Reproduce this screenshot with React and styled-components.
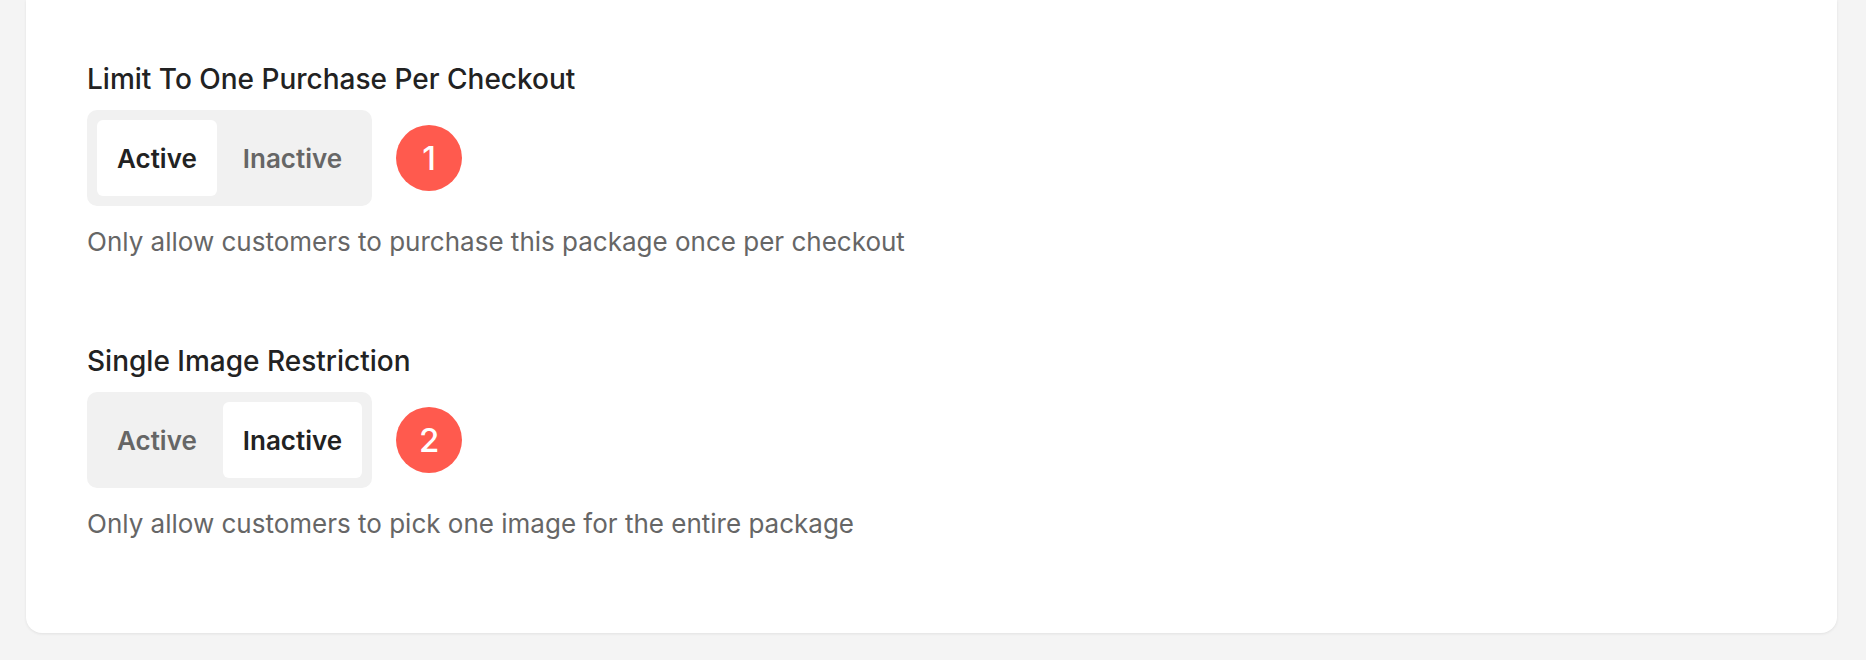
import React, { useState } from 'react';
import styled, { createGlobalStyle } from 'styled-components';

const GlobalStyle = createGlobalStyle`
  html, body {
    margin: 0;
    padding: 0;
    background: #f4f4f4;
  }
  body {
    font-family: Inter, "Liberation Sans", sans-serif;
    -webkit-font-smoothing: antialiased;
  }
`;

const Page = styled.div`
  height: 660px;
  padding: 0 29px 27px 26px;
  box-sizing: border-box;
  display: flex;
  flex-direction: column;
`;

const Card = styled.div`
  flex: 1;
  background: #ffffff;
  border-radius: 0 0 16px 16px;
  box-shadow: 0 1px 3px rgba(0, 0, 0, 0.08);
  padding: 63px 61px 0 61px;
  display: flex;
  flex-direction: column;
  gap: 87px;
`;

const Setting = styled.div`
  display: flex;
  flex-direction: column;
`;

const Label = styled.div`
  font-size: 28px;
  line-height: 32px;
  font-weight: 500;
  color: #222222;
`;

const ControlRow = styled.div`
  display: flex;
  align-items: center;
  gap: 24px;
  margin-top: 15px;
`;

const Segmented = styled.div`
  display: flex;
  gap: 6px;
  padding: 10px;
  background: #f1f1f1;
  border-radius: 10px;
`;

const Segment = styled.button`
  border: none;
  margin: 0;
  height: 76px;
  padding: 0 20px;
  border-radius: 6px;
  font-family: Inter, "Liberation Sans", sans-serif;
  font-size: 26px;
  font-weight: 600;
  cursor: pointer;
  background: ${p => (p.$selected ? '#ffffff' : 'transparent')};
  color: ${p => (p.$selected ? '#222222' : '#666666')};
`;

const Badge = styled.div`
  width: 66px;
  height: 66px;
  border-radius: 50%;
  background: #ff5a4e;
  color: #ffffff;
  display: flex;
  align-items: center;
  justify-content: center;
  font-family: Inter, "Liberation Sans", sans-serif;
  font-size: 33px;
  font-weight: 500;
  line-height: 1;
`;

const Hint = styled.div`
  margin-top: 20px;
  font-size: 26px;
  line-height: 32px;
  color: #666666;
`;

const settings = [
  {
    label: 'Limit To One Purchase Per Checkout',
    hint: 'Only allow customers to purchase this package once per checkout',
    initial: 'Active',
  },
  {
    label: 'Single Image Restriction',
    hint: 'Only allow customers to pick one image for the entire package',
    initial: 'Inactive',
  },
];

function ToggleSetting({ label, hint, initial, number }) {
  const [value, setValue] = useState(initial);
  return (
    <Setting>
      <Label>{label}</Label>
      <ControlRow>
        <Segmented>
          {['Active', 'Inactive'].map(opt => (
            <Segment key={opt} $selected={value === opt} onClick={() => setValue(opt)}>
              {opt}
            </Segment>
          ))}
        </Segmented>
        <Badge>{number}</Badge>
      </ControlRow>
      <Hint>{hint}</Hint>
    </Setting>
  );
}

export default function App() {
  return (
    <>
      <GlobalStyle />
      <Page>
        <Card>
          {settings.map((s, i) => (
            <ToggleSetting key={s.label} {...s} number={i + 1} />
          ))}
        </Card>
      </Page>
    </>
  );
}
